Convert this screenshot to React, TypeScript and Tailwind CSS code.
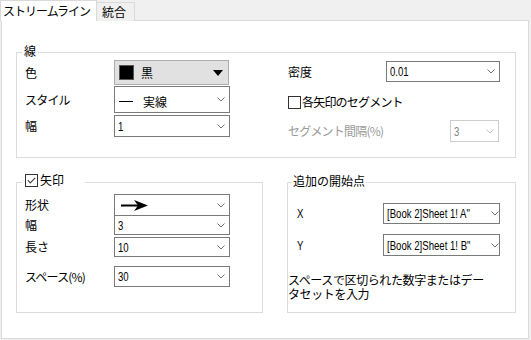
import React from "react";

const JP = { fontFamily: '"Noto Sans CJK JP", "Noto Sans", sans-serif' };
const LATF = { fontFamily: '"Liberation Sans", Arial, sans-serif' };

function Lat({ children }: { children: React.ReactNode }) {
  return (
    <span style={LATF} className="inline-block origin-left scale-x-[0.8] whitespace-nowrap text-[12px] leading-[14px]">
      {children}
    </span>
  );
}

function Chevron({ disabled }: { disabled?: boolean }) {
  return (
    <svg width="8" height="5" viewBox="0 0 8 5" className="shrink-0">
      <path d="M0.5 0.5 L4 4 L7.5 0.5" fill="none" stroke={disabled ? "#c4c4c4" : "#707070"} strokeWidth="1" />
    </svg>
  );
}

function Combo({
  className,
  children,
  disabled,
}: {
  className: string;
  children?: React.ReactNode;
  disabled?: boolean;
}) {
  return (
    <div
      className={
        "flex items-center bg-white pl-[3px] pr-[4px] border " +
        (disabled ? "border-[#cccccc] text-[#838383] " : "border-[#7a7a7a] text-black ") +
        className
      }
    >
      <div className="flex-1 whitespace-nowrap text-[12px] leading-[14px]">{children}</div>
      <Chevron disabled={disabled} />
    </div>
  );
}

function Label({ className, children }: { className: string; children: React.ReactNode }) {
  return <div className={"text-[12px] leading-[14px] whitespace-nowrap " + className}>{children}</div>;
}

export default function App() {
  return (
    <div className="w-[531px] h-[340px] bg-[#f0f0f0] text-black" style={JP}>
      {/* tabs */}
      <div className="flex items-end h-[21px] relative z-10">
        <div className="w-[97px] h-[21px] bg-white border-l border-t border-r border-[#d9d9d9] pl-[2px] text-[12px] leading-[20px] whitespace-nowrap tracking-[-1px]">
          ストリームライン
        </div>
        <div className="w-[38px] h-[19px] bg-[#f0f0f0] border-t border-r border-[#d9d9d9] pl-[5px] text-[12px] leading-[18px] whitespace-nowrap">
          統合
        </div>
      </div>
      {/* panel */}
      <div className="ml-[1px] -mt-[1px] w-[528px] h-[319px] bg-white border border-[#d9d9d9] flex flex-col">
        {/* group 線 */}
        <div className="relative ml-[14px] mt-[31px] w-[500px] h-[106px] border border-[#dcdcdc] flex">
          <div className="absolute left-[5px] -top-[10px] bg-white px-[2px] text-[12px] leading-[16px]">線</div>
          {/* left column */}
          <div className="flex flex-col pl-[8px] w-[213px]">
            <div className="flex items-center mt-[7px] h-[25px]">
              <Label className="w-[89px] text-black">色</Label>
              <div className="w-[115px] h-[25px] bg-[#e1e1e1] border border-[#adadad] flex items-center pl-[4px] pr-[5px]">
                <div className="w-[15px] h-[15px] bg-black border border-[#555]" />
                <span className="ml-[7px] text-[12px] leading-[14px]">黒</span>
                <div className="flex-1" />
                <svg width="10" height="6" viewBox="0 0 10 6">
                  <path d="M0 0 L10 0 L5 6 Z" fill="#000" />
                </svg>
              </div>
            </div>
            <div className="flex items-center mt-[1px] h-[27px]">
              <Label className="w-[89px] text-black tracking-[-0.8px]">スタイル</Label>
              <Combo className="w-[116px] h-[27px]">
                <span className="inline-flex items-center">
                  <span className="inline-block w-[14px] h-[1px] bg-black ml-[1px]" />
                  <span className="ml-[10px]">実線</span>
                </span>
              </Combo>
            </div>
            <div className="flex items-center mt-[2px] h-[22px]">
              <Label className="w-[89px] text-black">幅</Label>
              <Combo className="w-[116px] h-[22px]">
                <Lat>1</Lat>
              </Combo>
            </div>
          </div>
          {/* right column */}
          <div className="flex flex-col pl-[58px]">
            <div className="flex items-center mt-[8px] h-[21px]">
              <Label className="w-[98px] text-black">密度</Label>
              <Combo className="w-[114px] h-[21px]">
                <Lat>0.01</Lat>
              </Combo>
            </div>
            <div className="flex items-center mt-[12px] h-[16px]">
              <div className="w-[13px] h-[13px] border border-[#333] bg-white" />
              <span className="ml-[1px] text-[12px] leading-[14px] tracking-[-0.8px] whitespace-nowrap">各矢印のセグメント</span>
            </div>
            <div className="flex items-center mt-[10px] h-[22px]">
              <Label className="w-[162px] text-[#9a9a9a] tracking-[-0.8px]">セグメント間隔(%)</Label>
              <Combo disabled className="w-[49px] h-[22px]">
                <Lat>3</Lat>
              </Combo>
            </div>
          </div>
        </div>

        <div className="flex mt-[24px] ml-[14px] items-start">
          {/* group 矢印 */}
          <div className="relative w-[247px] h-[131px] border border-[#dcdcdc] flex flex-col pl-[8px]">
            <div className="absolute left-[5px] -top-[11px] w-[63px] h-[16px] bg-white flex items-center pl-[3px]">
              <div className="w-[13px] h-[13px] border border-[#333] bg-white flex items-center justify-center">
                <svg width="9" height="7" viewBox="0 0 9 7">
                  <path d="M0.8 3.2 L3.3 5.8 L8.2 0.8" fill="none" stroke="#444" strokeWidth="1.2" />
                </svg>
              </div>
              <span className="ml-[2px] text-[12px] leading-[16px]">矢印</span>
            </div>
            <div className="flex items-center mt-[11px] h-[22px]">
              <Label className="w-[89px] text-black">形状</Label>
              <Combo className="w-[116px] h-[22px]">
                <svg width="28" height="11" viewBox="0 0 28 11" className="ml-[3px] block">
                  <rect x="0" y="4.5" width="18" height="2" fill="#000" />
                  <path d="M13 0 L27 5.5 L13 11 L17 5.5 Z" fill="#000" />
                </svg>
              </Combo>
            </div>
            <div className="flex items-center -mt-[1px] h-[20px]">
              <Label className="w-[89px] text-black">幅</Label>
              <Combo className="w-[116px] h-[20px]">
                <Lat>3</Lat>
              </Combo>
            </div>
            <div className="flex items-center mt-[2px] h-[20px]">
              <Label className="w-[89px] text-black">長さ</Label>
              <Combo className="w-[116px] h-[20px]">
                <Lat>10</Lat>
              </Combo>
            </div>
            <div className="flex items-center mt-[9px] h-[21px]">
              <Label className="w-[89px] text-black tracking-[-0.8px]">スペース(%)</Label>
              <Combo className="w-[116px] h-[21px]">
                <Lat>30</Lat>
              </Combo>
            </div>
          </div>

          {/* group 追加の開始点 */}
          <div className="relative ml-[24px] w-[229px] h-[131px] border border-[#dcdcdc] flex flex-col">
            <div className="absolute left-[4px] -top-[10px] bg-white px-[1px] text-[12px] leading-[16px]">追加の開始点</div>
            <div className="flex items-center mt-[20px] h-[21px] pl-[9px]">
              <Label className="w-[86px] text-black">
                <Lat>X</Lat>
              </Label>
              <Combo className="w-[117px] h-[21px]">
                <Lat>[Book 2]Sheet 1! A"</Lat>
              </Combo>
            </div>
            <div className="flex items-center mt-[10px] h-[22px] pl-[9px]">
              <Label className="w-[86px] text-black">
                <Lat>Y</Lat>
              </Label>
              <Combo className="w-[117px] h-[22px]">
                <Lat>[Book 2]Sheet 1! B"</Lat>
              </Combo>
            </div>
            <div className="mt-[17px] text-[12px] leading-[14px] tracking-[-0.4px]">
              <div className="whitespace-nowrap">スペースで区切られた数字またはデー</div>
              <div className="whitespace-nowrap">タセットを入力</div>
            </div>
          </div>
        </div>
      </div>
    </div>
  );
}
